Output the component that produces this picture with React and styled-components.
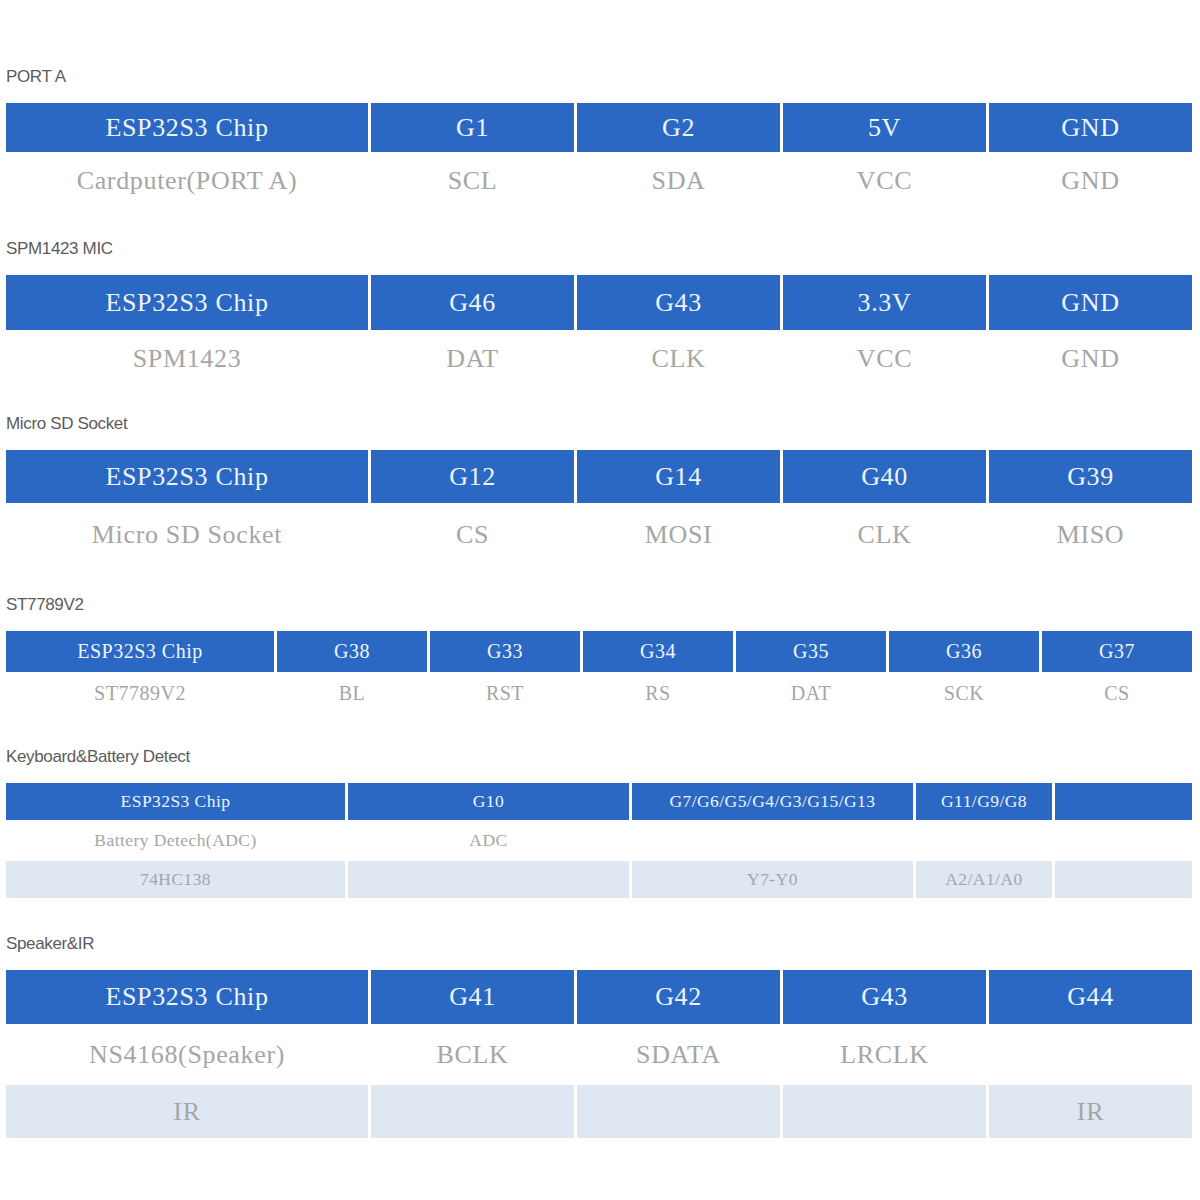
import React from "react"
import styled, { createGlobalStyle } from "styled-components"

const GlobalStyle = createGlobalStyle`
  html, body {
    margin: 0;
    padding: 0;
    background: #ffffff;
  }
`

const Page = styled.div`
  width: 1200px;
  height: 1200px;
  box-sizing: border-box;
  padding: 0 8px 0 6px;
  background: #ffffff;
  overflow: hidden;
`

const Section = styled.section`
  margin-top: ${props => props.top}px;
  display: flex;
  flex-direction: column;
  gap: 16px;
`

const Label = styled.div`
  height: 20px;
  line-height: 20px;
  font-family: "Liberation Sans", Arial, sans-serif;
  font-size: 17px;
  color: #5c5c5c;
  letter-spacing: -0.35px;
`

const Table = styled.div`
  display: flex;
  flex-direction: column;
`

const Row = styled.div`
  display: grid;
  grid-template-columns: ${props => props.cols};
  column-gap: 3px;
  height: ${props => props.h}px;
`

const Cell = styled.div`
  display: flex;
  align-items: center;
  justify-content: center;
  white-space: nowrap;
  font-family: "Liberation Serif", "Times New Roman", serif;
  font-size: ${props => props.size}px;
  letter-spacing: ${props => props.size * 0.025}px;
  background: ${props =>
    props.kind === "head" ? "#2a68c3" : props.kind === "light" ? "#dfe7f3" : "transparent"};
  color: ${props => (props.kind === "head" ? "#eef4fc" : "#a6a6a6")};
`

const tables = [
  {
    label: "PORT A",
    top: 67,
    cols: "362px repeat(4, 1fr)",
    size: 26,
    rows: [
      { kind: "head", h: 49, cells: ["ESP32S3 Chip", "G1", "G2", "5V", "GND"] },
      { kind: "body", h: 58, cells: ["Cardputer(PORT A)", "SCL", "SDA", "VCC", "GND"] },
    ],
  },
  {
    label: "SPM1423 MIC",
    top: 29,
    cols: "362px repeat(4, 1fr)",
    size: 26,
    rows: [
      { kind: "head", h: 55, cells: ["ESP32S3 Chip", "G46", "G43", "3.3V", "GND"] },
      { kind: "body", h: 58, cells: ["SPM1423", "DAT", "CLK", "VCC", "GND"] },
    ],
  },
  {
    label: "Micro SD Socket",
    top: 26,
    cols: "362px repeat(4, 1fr)",
    size: 26,
    rows: [
      { kind: "head", h: 53, cells: ["ESP32S3 Chip", "G12", "G14", "G40", "G39"] },
      { kind: "body", h: 64, cells: ["Micro SD Socket", "CS", "MOSI", "CLK", "MISO"] },
    ],
  },
  {
    label: "ST7789V2",
    top: 28,
    cols: "268px repeat(6, 1fr)",
    size: 20,
    rows: [
      { kind: "head", h: 41, cells: ["ESP32S3 Chip", "G38", "G33", "G34", "G35", "G36", "G37"] },
      { kind: "body", h: 42, cells: ["ST7789V2", "BL", "RST", "RS", "DAT", "SCK", "CS"] },
    ],
  },
  {
    label: "Keyboard&Battery Detect",
    top: 33,
    cols: "339px 281px 281px 136px 1fr",
    size: 17.5,
    rows: [
      { kind: "head", h: 37, cells: ["ESP32S3 Chip", "G10", "G7/G6/G5/G4/G3/G15/G13", "G11/G9/G8", ""] },
      { kind: "body", h: 41, cells: ["Battery Detech(ADC)", "ADC", "", "", ""] },
      { kind: "light", h: 37, cells: ["74HC138", "", "Y7-Y0", "A2/A1/A0", ""] },
    ],
  },
  {
    label: "Speaker&IR",
    top: 36,
    cols: "362px repeat(4, 1fr)",
    size: 26,
    rows: [
      { kind: "head", h: 54, cells: ["ESP32S3 Chip", "G41", "G42", "G43", "G44"] },
      { kind: "body", h: 61, cells: ["NS4168(Speaker)", "BCLK", "SDATA", "LRCLK", ""] },
      { kind: "light", h: 53, cells: ["IR", "", "", "", "IR"] },
    ],
  },
]

const App = () => {
  return (
    <Page>
      <GlobalStyle />
      {tables.map(t => (
        <Section key={t.label} top={t.top}>
          <Label>{t.label}</Label>
          <Table>
            {t.rows.map((r, i) => (
              <Row key={i} cols={t.cols} h={r.h}>
                {r.cells.map((c, j) => (
                  <Cell key={j} kind={r.kind} size={t.size}>
                    {c}
                  </Cell>
                ))}
              </Row>
            ))}
          </Table>
        </Section>
      ))}
    </Page>
  )
}

export default App
